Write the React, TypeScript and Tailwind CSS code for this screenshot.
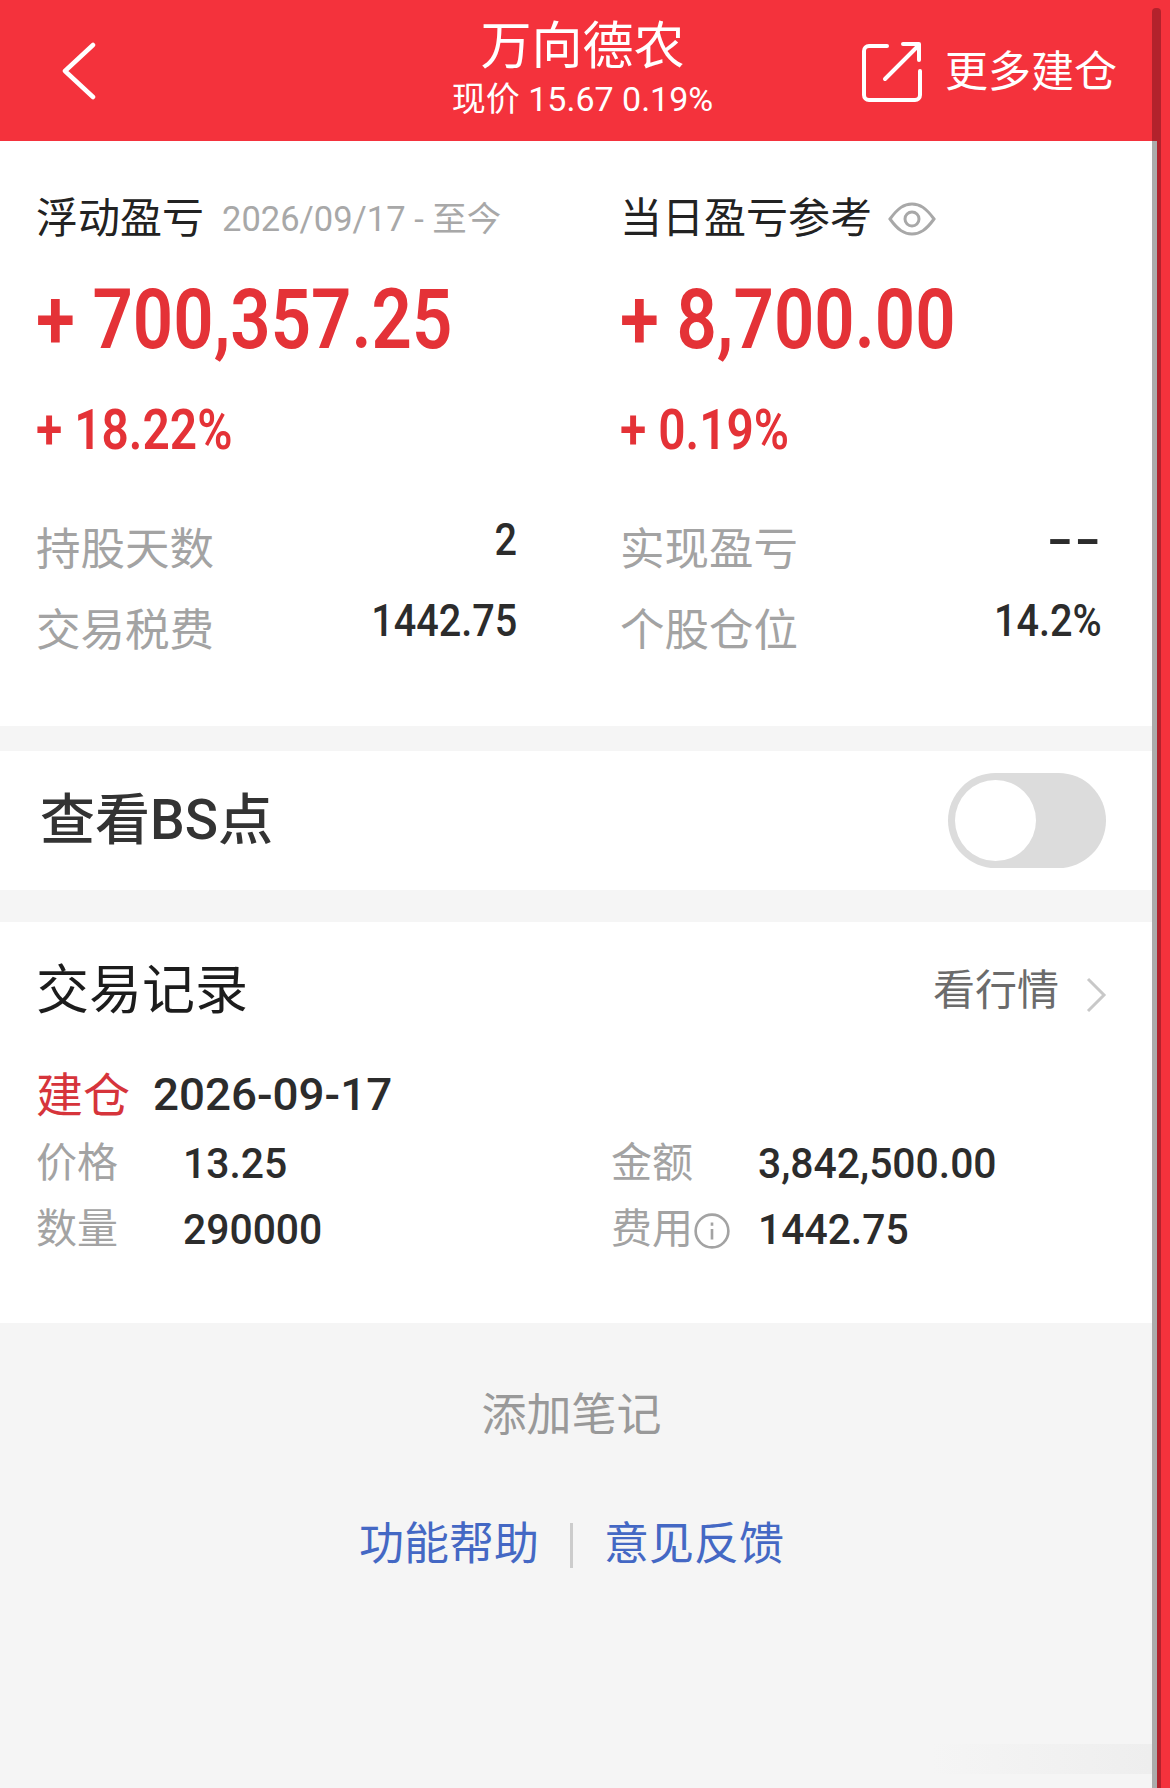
const cjk = "font-['Roboto','Noto_Sans_CJK_SC',sans-serif]";

const Stat = ({ label, value, wide }: any) => (
  <div className="flex h-[81px] items-start justify-between">
    <span className="mt-[6px] text-[44.5px] leading-[60px] text-[#a3a3a3]">{label}</span>
    <span
      className={
        wide
          ? "origin-right text-[44px] leading-[52px] font-bold text-[#2c2c2c] [transform:scaleX(1.6)]"
          : "origin-right text-[44px] leading-[52px] font-medium text-[#2c2c2c] [transform:scaleX(0.9)]"
      }
    >
      {value}
    </span>
  </div>
);

const TradeCell = ({ label, value, info }: any) => (
  <div className="flex h-[66px] items-center">
    <div className="flex w-[147px] items-center">
      <span className="text-[41px] leading-none text-[#a3a3a3]">{label}</span>
      {info && (
        <svg width="38" height="38" viewBox="0 0 36 36" fill="none" stroke="#a3a3a3" strokeWidth="2.5" className="mt-[4px]">
          <circle cx="18" cy="18" r="15.5" />
          <path d="M18 16v10M18 10v3" />
        </svg>
      )}
    </div>
    <span className="origin-left text-[43px] leading-none font-medium text-[#2c2c2c] [transform:scaleX(0.95)]">{value}</span>
  </div>
);

const Summary = ({ title, extra, amount, pct, stats }: any) => (
  <div>
    <div className="flex h-[60px] items-center">
      <span className="text-[42px] leading-none text-[#222222]">{title}</span>
      {extra}
    </div>
    <div className="mt-[23px] h-[96px] origin-left text-[84px] leading-[96px] font-semibold whitespace-nowrap text-[#e43237] [transform:scaleX(0.842)]">
      {amount}
    </div>
    <div className="mt-[32px] h-[60px] origin-left text-[55px] leading-[60px] font-semibold whitespace-nowrap text-[#e43237] [transform:scaleX(0.87)]">
      {pct}
    </div>
    <div className="mt-[54px]">
      {stats.map((s: any) => (
        <Stat key={s.label} label={s.label} value={s.value} wide={s.wide} />
      ))}
    </div>
  </div>
);

export default function App() {
  return (
    <div className={`flex h-[1788px] w-[1170px] overflow-hidden bg-[#f5f5f5] ${cjk}`}>
      <div className="relative h-full w-[1152px]">
        {/* header */}
        <div className="flex h-[141px] items-center justify-between bg-[#f4323c] pr-[35px] pl-[62px] text-white">
          <svg width="34" height="58" viewBox="0 0 34 58" fill="none" stroke="white" strokeWidth="4.5" strokeLinecap="round" strokeLinejoin="round">
            <path d="M31 3 3 29l28 26" />
          </svg>
          <div className="mb-[8px] ml-[208px] flex flex-col items-center">
            <div className="text-[51px] leading-[62px]">万向德农</div>
            <div className="mt-[2px] text-[34px] leading-[38px]">现价 15.67 0.19%</div>
          </div>
          <div className="mt-[2px] flex items-center">
            <svg width="62" height="62" viewBox="0 0 62 62" fill="none" stroke="white" strokeWidth="4" strokeLinecap="round" strokeLinejoin="round">
              <path d="M26 5H8a5 5 0 0 0-5 5v44a5 5 0 0 0 5 5h46a5 5 0 0 0 5-5V30" />
              <path d="M24 38 58 4M42 3h16v16" />
            </svg>
            <span className="mt-[2px] ml-[22px] text-[43px] leading-none">更多建仓</span>
          </div>
        </div>

        {/* summary */}
        <div className="grid h-[585px] grid-cols-[481px_482px] gap-x-[103px] bg-white pt-[48px] pl-[36px]">
          <Summary
            title="浮动盈亏"
            extra={<span className="ml-[18px] text-[34.5px] leading-none whitespace-nowrap text-[#a8a8a8]">2026/09/17 - 至今</span>}
            amount="+ 700,357.25"
            pct="+ 18.22%"
            stats={[
              { label: "持股天数", value: "2" },
              { label: "交易税费", value: "1442.75" },
            ]}
          />
          <Summary
            title="当日盈亏参考"
            extra={
              <svg width="48" height="34" viewBox="0 0 48 34" fill="none" stroke="#a8a8a8" strokeWidth="3" className="ml-[16px]">
                <path d="M2 17C10 6 16 2 24 2s14 4 22 15c-8 11-14 15-22 15S10 28 2 17Z" />
                <circle cx="24" cy="17" r="7" />
              </svg>
            }
            amount="+ 8,700.00"
            pct="+ 0.19%"
            stats={[
              { label: "实现盈亏", value: "--", wide: true },
              { label: "个股仓位", value: "14.2%" },
            ]}
          />
        </div>

        {/* bs toggle */}
        <div className="mt-[25px] flex h-[139px] items-center justify-between bg-white pr-[46px] pl-[40px]">
          <span className="text-[55px] leading-none font-medium text-[#333333]">查看BS点</span>
          <div className="flex h-[95px] w-[158px] items-center rounded-full bg-[#dcdcdc] pl-[7px]">
            <div className="h-[81px] w-[81px] rounded-full bg-white" />
          </div>
        </div>

        {/* trades */}
        <div className="mt-[32px] h-[401px] bg-white pr-[45px] pl-[36px]">
          <div className="flex h-[138px] items-center justify-between">
            <span className="text-[53px] leading-none text-[#1c1c1c]">交易记录</span>
            <div className="flex items-center">
              <span className="text-[42px] leading-none text-[#6b6b6b]">看行情</span>
              <svg width="22" height="36" viewBox="0 0 22 36" fill="none" stroke="#c8c8c8" strokeWidth="3" className="mt-[8px] ml-[26px]">
                <path d="M3 2l16 16L3 34" />
              </svg>
            </div>
          </div>
          <div className="mt-[10px] flex h-[50px] items-center">
            <span className="text-[47px] leading-none text-[#d6343b]">建仓</span>
            <span className="ml-[23px] origin-left text-[44px] leading-none font-medium text-[#2c2c2c] [transform:scaleX(1.04)]">2026-09-17</span>
          </div>
          <div className="mt-[10px] grid grid-cols-[575px_1fr]">
            <TradeCell label="价格" value="13.25" />
            <TradeCell label="金额" value="3,842,500.00" />
            <TradeCell label="数量" value="290000" />
            <TradeCell label="费用" value="1442.75" info />
          </div>
        </div>

        {/* footer */}
        <div className="flex flex-col items-center pt-[68px] pr-[9px]">
          <div className="text-[45px] leading-[50px] text-[#999999]">添加笔记</div>
          <div className="mt-[79px] flex items-center text-[45px] leading-[50px] text-[#4468c4]">
            <span>功能帮助</span>
            <span className="mx-[31px] h-[45px] w-[3px] bg-[#cccccc]" />
            <span>意见反馈</span>
          </div>
        </div>

        {/* faint watermark left in the corner */}
        <div className="absolute right-0 bottom-[14px] h-[30px] w-[220px] bg-gradient-to-r from-transparent to-[#eeeeee]" />
      </div>

      {/* right edge of the screenshot */}
      <div className="flex h-full w-[18px] bg-[#f4323c]">
        <div className="mt-[8px] flex w-[5px] flex-col">
          <div className="h-[133px] rounded-tl-[4px] bg-[#b3222c]" />
          <div className="flex-1 bg-[#ababab]" />
        </div>
        <div className="mt-[8px] w-[4px] rounded-tr-[4px] bg-[#b3222c]" />
      </div>
    </div>
  );
}
